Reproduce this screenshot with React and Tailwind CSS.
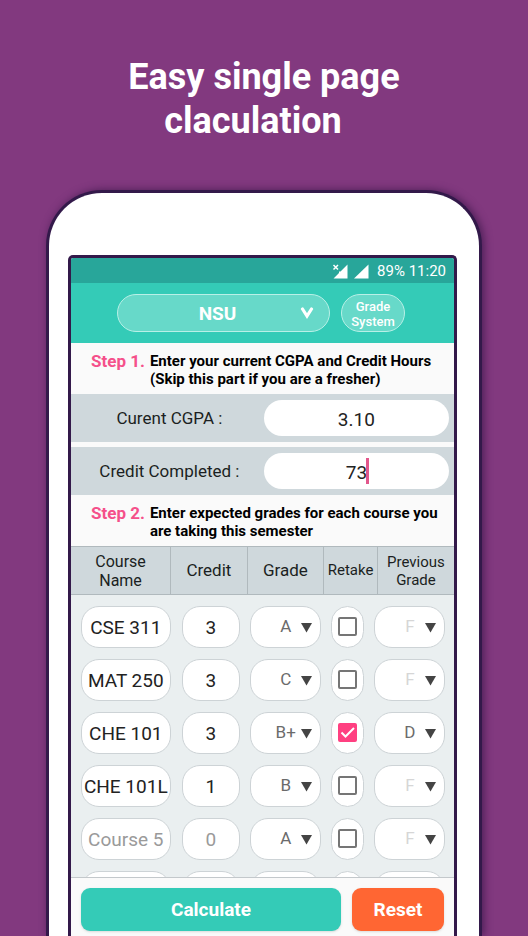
import { useState } from 'react';

const initialCourses = [
  { name: 'CSE 311', credit: '3', grade: 'A', retake: false, previous: 'F' },
  { name: 'MAT 250', credit: '3', grade: 'C', retake: false, previous: 'F' },
  { name: 'CHE 101', credit: '3', grade: 'B+', retake: true, previous: 'D' },
  { name: 'CHE 101L', credit: '1', grade: 'B', retake: false, previous: 'F' },
  { name: '', credit: '', grade: 'A', retake: false, previous: 'F' },
  { name: '', credit: '', grade: 'A', retake: false, previous: 'F' },
];

const grades = ['A', 'A-', 'B+', 'B', 'B-', 'C+', 'C', 'D', 'F'];

const pill = 'h-[42px] w-full rounded-[18px] border border-[#cdd3d6] bg-white text-center';

const StatusBar = () => (
  <div className="flex h-[25px] shrink-0 items-center justify-end bg-[#28a69a] pr-2 pt-[2px] text-[15px] text-white">
    <svg width="16" height="15" viewBox="0 0 16 15" className="mr-[5px]" aria-hidden="true">
      <path d="M15.500 .5v14H1.500L7 9V7.500h1.500z" fill="#fff" />
      <path d="M1.500 1l4.500 4.500M6 1L1.500 5.500" stroke="#fff" strokeWidth="1.5" />
    </svg>
    <svg width="16" height="15" viewBox="0 0 16 15" className="mr-2" aria-hidden="true">
      <path d="M15.500 .5v14H1z" fill="#fff" />
    </svg>
    <span>89% 11:20</span>
  </div>
);

const Header = () => (
  <header className="flex h-[60px] shrink-0 items-center gap-[11px] bg-[#34cbb7] pl-[46px] pr-[49px]">
    <div className="relative flex-1">
      <select
        aria-label="University"
        className="h-[38px] w-full appearance-none rounded-full border border-[#b9f0e7] bg-[#67d9c9] pl-6 pr-9 pt-[2px] text-center text-[19px] font-bold text-white"
      >
        <option>NSU</option>
      </select>
      <svg width="14" height="12" viewBox="0 0 14 12" className="pointer-events-none absolute right-4 top-[13px]" aria-hidden="true">
        <path d="M2.500 2L7 9l4.500-7" fill="none" stroke="#fff" strokeWidth="3.2" strokeLinecap="round" />
      </svg>
    </div>
    <button className="h-[38px] w-16 rounded-full border border-[#b9f0e7] bg-[#67d9c9] pt-[2px] text-[13px] font-medium leading-[15px] text-white">
      Grade System
    </button>
  </header>
);

const Step = ({ number, children }) => (
  <div className="flex h-[51px] shrink-0 gap-[5px] bg-[#fafafa] pl-5 pt-[9px] text-[15px] font-bold leading-[18px] text-black">
    <span className="text-[17px] text-[#f5508a] whitespace-nowrap">Step {number}.</span>
    <p className="whitespace-nowrap">{children}</p>
  </div>
);

const InfoRow = ({ id, label, value, onChange, active }) => (
  <div className="flex h-12 shrink-0 items-center bg-[#cfd8dc] pr-[5px]">
    <label htmlFor={id} className="flex-1 pl-1 pt-[2px] text-center text-[17px] text-[#1b1f22]">
      {label} :
    </label>
    <div className="relative w-[49%]">
      <input
        id={id}
        value={value}
        onChange={(e) => onChange(e.target.value)}
        className="h-9 w-full rounded-[18px] bg-white pt-[2px] text-center text-[19px] text-[#222]"
      />
      {active && <span className="absolute left-[calc(50%+10px)] top-[5px] h-[26px] w-[3px] bg-[#e2578c]" />}
    </div>
  </div>
);

const GradeSelect = ({ label, value, onChange, muted }) => (
  <div className="relative w-[71px]">
    <select
      aria-label={label}
      value={value}
      onChange={(e) => onChange(e.target.value)}
      className={`${pill} appearance-none text-[17px] ${muted ? 'text-[#d6d6d6]' : 'text-[#6b6b6b]'}`}
    >
      {grades.map((grade) => (
        <option key={grade}>{grade}</option>
      ))}
    </select>
    <svg width="11" height="10" viewBox="0 0 11 10" className="pointer-events-none absolute right-[9px] top-[17px]" aria-hidden="true">
      <path d="M0 0h11L5.500 9.500z" fill="#444" />
    </svg>
  </div>
);

const CourseRow = ({ course, index, onChange }) => (
  <tr className="h-[53px]">
    <td className="pl-[10px]">
      <input
        aria-label={`Course ${index} name`}
        value={course.name}
        placeholder={`Course ${index}`}
        onChange={(e) => onChange({ name: e.target.value })}
        className={`${pill} pt-[2px] text-[19px] text-[#222] placeholder:text-[#9a9a9a]`}
      />
    </td>
    <td className="pl-[11px] pr-[7px]">
      <input
        aria-label={`Course ${index} credit`}
        value={course.credit}
        placeholder="0"
        onChange={(e) => onChange({ credit: e.target.value })}
        className={`${pill} pt-[2px] text-[19px] text-[#222] placeholder:text-[#9a9a9a]`}
      />
    </td>
    <td className="pl-[3px]">
      <GradeSelect label={`Course ${index} grade`} value={course.grade} onChange={(grade) => onChange({ grade })} />
    </td>
    <td className="pl-[7px]">
      <label className="relative flex h-[42px] w-[33px] items-center justify-center rounded-full border border-[#cdd3d6] bg-white">
        <input
          type="checkbox"
          aria-label={`Retake course ${index}`}
          checked={course.retake}
          onChange={(e) => onChange({ retake: e.target.checked })}
          className="h-[19px] w-[19px] appearance-none rounded-[2px] border-2 border-[#757575] checked:border-[#ff4081] checked:bg-[#ff4081]"
        />
        {course.retake && (
          <svg width="19" height="19" viewBox="0 0 19 19" className="pointer-events-none absolute" aria-hidden="true">
            <path d="M3.500 9.500l4 4 8.500-8.500" fill="none" stroke="#fff" strokeWidth="2" />
          </svg>
        )}
      </label>
    </td>
    <td>
      <div className="-ml-[3px]">
        <GradeSelect
          label={`Course ${index} previous grade`}
          value={course.previous}
          onChange={(previous) => onChange({ previous })}
          muted={!course.retake}
        />
      </div>
    </td>
  </tr>
);

const CourseTable = ({ courses, onChange }) => (
  <div className="min-h-0 flex-1 overflow-hidden bg-[#eaeff0]">
    <table className="w-full table-fixed border-collapse">
      <thead>
        <tr className="h-12 border-y border-[#b0b9bd] bg-[#cfd8dc] text-[#1b1f22]">
          <th className="w-[26%] border-r border-[#b0b9bd] text-[16px] font-normal leading-[19px]">
            Course
            <br />
            Name
          </th>
          <th className="w-[20%] border-r border-[#b0b9bd] text-[17px] font-normal">Credit</th>
          <th className="w-[20%] border-r border-[#b0b9bd] text-[17px] font-normal">Grade</th>
          <th className="w-[14%] border-r border-[#b0b9bd] text-[15px] font-normal">Retake</th>
          <th className="w-[20%] text-[15px] font-normal leading-[18px]">Previous Grade</th>
        </tr>
      </thead>
      <tbody className="before:block before:h-[5px]">
        {courses.map((course, i) => (
          <CourseRow key={i} course={course} index={i + 1} onChange={(patch) => onChange(i, patch)} />
        ))}
      </tbody>
    </table>
  </div>
);

const App = () => {
  const [cgpa, setCgpa] = useState('3.10');
  const [completed, setCompleted] = useState('73');
  const [courses, setCourses] = useState(initialCourses);

  const updateCourse = (index, patch) => {
    setCourses((prev) => prev.map((course, i) => (i === index ? { ...course, ...patch } : course)));
  };

  return (
    <main className="flex h-screen flex-col overflow-hidden bg-[#82397f] px-[46px] font-[Roboto,sans-serif]">
      <h1 className="shrink-0 pb-[47px] pt-[55px] text-center text-[36px] font-bold leading-[44px] text-white">
        Easy single page
        <span className="block pr-[22px]">claculation</span>
      </h1>
      <div className="flex min-h-0 flex-1 flex-col rounded-t-[56px] border-x-[3px] border-t-[3px] border-[#33194a] bg-white pl-[19px] pr-[22px] pt-[62px] shadow-[2px_0_9px_#4a1e55]">
        <div className="flex min-h-0 flex-1 flex-col overflow-hidden rounded-t-[5px] border-x-[3px] border-t-[3px] border-[#33194a] bg-[#fafafa]">
          <StatusBar />
          <Header />
          <Step number={1}>
            Enter your current CGPA and Credit Hours
            <br />
            (Skip this part if you are a fresher)
          </Step>
          <InfoRow id="cgpa" label="Curent CGPA" value={cgpa} onChange={setCgpa} />
          <div className="h-[5px] shrink-0" />
          <InfoRow id="completed" label="Credit Completed" value={completed} onChange={setCompleted} active />
          <Step number={2}>
            Enter expected grades for each course you
            <br />
            are taking this semester
          </Step>
          <CourseTable courses={courses} onChange={updateCourse} />
          <footer className="flex shrink-0 gap-[11px] border-t border-[#c3c8cb] bg-[#fafafa] px-[10px] pb-[5px] pt-[10px] text-[19px] font-bold text-white">
            <button className="h-[43px] flex-1 rounded-[9px] bg-[#34cbb7] pt-[2px] shadow-sm">Calculate</button>
            <button onClick={() => setCourses(initialCourses)} className="h-[43px] w-[92px] rounded-[9px] bg-[#ff6633] pt-[2px] shadow-sm">
              Reset
            </button>
          </footer>
        </div>
      </div>
    </main>
  );
};

export default App;
